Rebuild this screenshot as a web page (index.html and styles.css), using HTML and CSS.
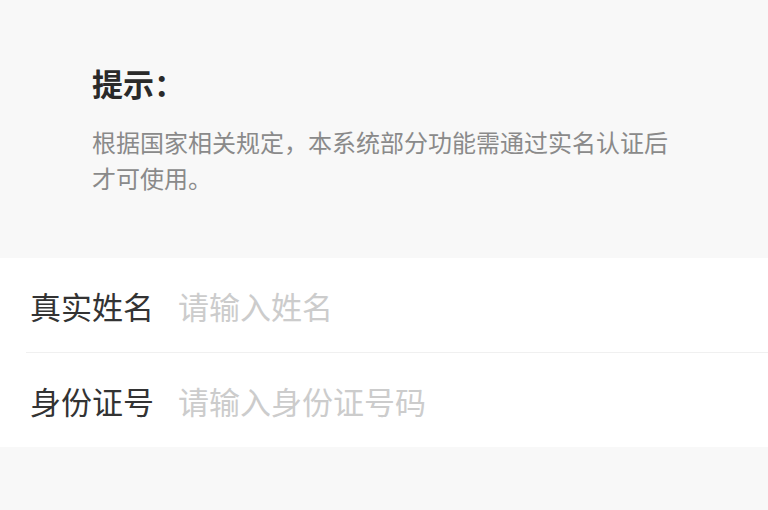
FILE: index.html
```html
<!DOCTYPE html>
<html lang="zh-CN">
<head>
<meta charset="utf-8">
<title>实名认证</title>
<link rel="stylesheet" href="styles.css">
</head>
<body>
<section class="tip">
  <h1 class="tip-title">提示：</h1>
  <p class="tip-text">根据国家相关规定，本系统部分功能需通过实名认证后才可使用。</p>
</section>
<form class="card">
  <label class="row">
    <span class="label">真实姓名</span>
    <input class="field" type="text" placeholder="请输入姓名">
  </label>
  <label class="row">
    <span class="label">身份证号</span>
    <input class="field" type="text" placeholder="请输入身份证号码">
  </label>
</form>
</body>
</html>
```
FILE: styles.css
```css
html, body {
  margin: 0;
  padding: 0;
  background: #f8f8f8;
  font-family: "Noto Sans CJK SC", "Noto Sans", sans-serif;
}

.tip {
  padding: 62px 93px 62px 92px;
}

.tip-title {
  margin: 0;
  font-size: 31px;
  line-height: 42px;
  font-weight: bold;
  color: #2a2a2a;
}

.tip-text {
  margin: 20px 0 0;
  max-width: 586px;
  font-size: 24px;
  line-height: 36px;
  color: #8a8a8a;
}

.card {
  display: flex;
  flex-direction: column;
  background: #ffffff;
  padding-left: 26px;
  margin: 0;
}

.row {
  display: flex;
  align-items: center;
  height: 94px;
  border-bottom: 1px solid #f0f0f0;
}

.row:last-child {
  border-bottom: none;
}

.label {
  width: 148px;
  margin-left: 4px;
  font-size: 31px;
  color: #333333;
  flex: none;
}

.field {
  flex: 1;
  border: none;
  outline: none;
  background: transparent;
  padding: 0;
  font-family: "Noto Sans CJK SC", "Noto Sans", sans-serif;
  font-size: 31px;
  color: #333333;
}

.field::placeholder {
  color: #cccccc;
}
```
